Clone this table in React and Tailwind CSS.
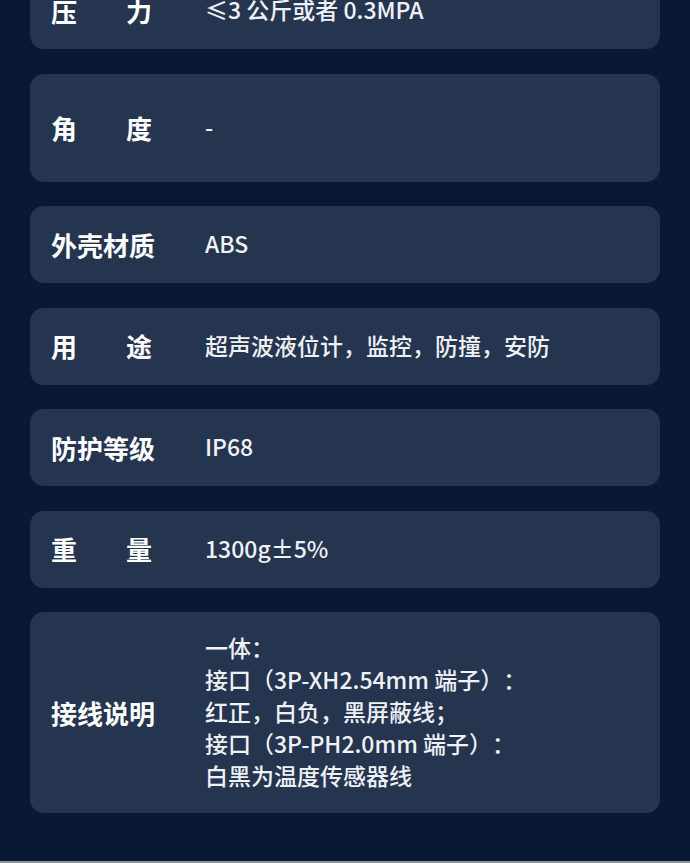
import React from 'react';

const specs = [
  { label: ['压', '力'], value: '≤3 公斤或者 0.3MPA', h: 'h-[77px]', first: true },
  { label: ['角', '度'], value: '-', h: 'h-[108px]' },
  { label: ['外壳材质'], value: 'ABS', h: 'h-[77px]' },
  { label: ['用', '途'], value: '超声波液位计，监控，防撞，安防', h: 'h-[77px]' },
  { label: ['防护等级'], value: 'IP68', h: 'h-[77px]' },
  { label: ['重', '量'], value: '1300g±5%', h: 'h-[77px]' },
];

const wiring = [
  '一体：',
  '接口（3P-XH2.54mm 端子）：',
  '红正，白负，黑屏蔽线；',
  '接口（3P-PH2.0mm 端子）：',
  '白黑为温度传感器线',
];

function Label({ parts }) {
  return (
    <div
      className={`${parts.length > 1 ? 'w-[101px]' : 'w-[104px]'} shrink-0 flex justify-between text-[26px] font-bold text-white leading-none`}
    >
      {parts.map((p) => (
        <span key={p}>{p}</span>
      ))}
    </div>
  );
}

function SpecCard({ label, value, h, first }) {
  return (
    <div className={`${h} ${first ? '-mt-[28px]' : ''} rounded-[14px] bg-[#25344f] flex items-center pl-[21px]`}>
      <div className="w-[154px] shrink-0">
        <Label parts={label} />
      </div>
      <div className="text-[23px] font-medium text-[#eef1f6] leading-none -mt-[2px]">{value}</div>
    </div>
  );
}

export default function App() {
  return (
    <div
      className="w-[690px] h-[863px] overflow-hidden bg-[#081835] flex flex-col [text-spacing-trim:space-all]"
      style={{ fontFamily: '"Noto Sans CJK SC", "Noto Sans", sans-serif' }}
    >
      <div className="flex-1 px-[30px] flex flex-col gap-[24.5px]">
        {specs.map((s) => (
          <SpecCard key={s.label.join('')} {...s} />
        ))}
        <div className="h-[201px] rounded-[14px] bg-[#25344f] flex items-center pl-[21px]">
          <div className="w-[154px] shrink-0">
            <Label parts={['接线说明']} />
          </div>
          <div className="text-[23px] font-medium text-[#eef1f6] leading-[32px] -mt-[3px]">
            {wiring.map((line) => (
              <div key={line}>{line}</div>
            ))}
          </div>
        </div>
      </div>
      <div className="h-[2px] bg-[#8d929c]" />
    </div>
  );
}
